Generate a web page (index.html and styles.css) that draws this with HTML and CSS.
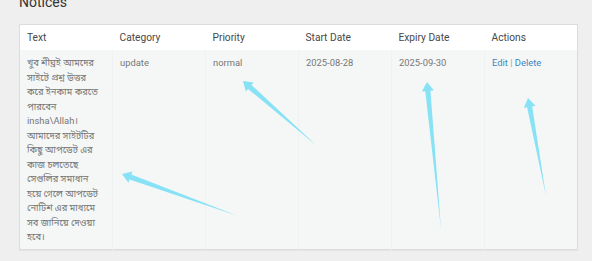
FILE: index.html
```html
<!DOCTYPE html>
<html lang="bn">
<head>
<meta charset="utf-8">
<title>Notices</title>
<link rel="stylesheet" href="styles.css">
</head>
<body>
<main class="page">
  <h2 class="title">Notices</h2>
  <table class="notices">
    <thead>
      <tr>
        <th>Text</th>
        <th>Category</th>
        <th>Priority</th>
        <th>Start Date</th>
        <th>Expiry Date</th>
        <th>Actions</th>
      </tr>
    </thead>
    <tbody>
      <tr>
        <td class="bn">খুব শীঘ্রই আমদের<br>সাইটে প্রশ্ন উত্তর<br>করে ইনকাম করতে<br>পারবেন<br>insha\Allah।<br>আমাদের সাইটটির<br>কিছু আপডেট এর<br>কাজ চলতেছে<br>সেগুলির সমাধান<br>হয়ে গেলে আপডেট<br>নোটিশ এর মাধ্যমে<br>সব জানিয়ে দেওয়া<br>হবে।</td>
        <td>update</td>
        <td>normal</td>
        <td>2025-08-28</td>
        <td>2025-09-30</td>
        <td><a href="#" class="act">Edit</a> <span class="sep">|</span> <a href="#" class="act">Delete</a></td>
      </tr>
    </tbody>
  </table>
</main>
<svg class="arrows" width="592" height="261" viewBox="0 0 592 261" aria-hidden="true">
  <g fill="#88e2f5">
    <polygon transform="translate(317 146) rotate(221.3)" points="0,0 89.5,-2.6 89.5,-6 98.5,0 89.5,6 89.5,2.6"/>
    <polygon transform="translate(238 216) rotate(199.9)" points="0,0 114.4,-2.6 114.4,-6 123.4,0 114.4,6 114.4,2.6"/>
    <polygon transform="translate(441 229) rotate(264.56)" points="0,0 138.7,-2.6 138.7,-6 147.7,0 138.7,6 138.7,2.6"/>
    <polygon transform="translate(546 196) rotate(259.6)" points="0,0 90.6,-2.6 90.6,-6 99.6,0 90.6,6 90.6,2.6"/>
  </g>
</svg>
</body>
</html>
```

FILE: styles.css
```css
html, body {
  margin: 0;
  padding: 0;
  background: #efefef;
  overflow: hidden;
}

body {
  position: relative;
  width: 592px;
  height: 261px;
  font-family: Roboto, "Noto Sans", sans-serif;
}

.page {
  padding: 0 15px 0 19px;
}

.title {
  margin: -6px 0 14px;
  font-size: 14px;
  line-height: 16px;
  font-weight: 400;
  color: #333;
}

.notices {
  width: 559px;
  border-collapse: collapse;
  table-layout: fixed;
  border: 1px solid #dcdcdc;
  box-shadow: 0 1px 1px rgba(0, 0, 0, 0.04);
}

.notices th {
  background: #fff;
  text-align: left;
  font-weight: 400;
  font-size: 10.2px;
  line-height: 14px;
  color: #474747;
  padding: 6px 4px 5px 7px;
}

.notices td {
  background: #f5f7f7;
  vertical-align: top;
  font-size: 9.4px;
  line-height: 14.5px;
  color: #767676;
  padding: 6px 4px 4px 7px;
  border-left: 1px solid #f0f2f2;
}

.notices td:first-child {
  border-left: none;
}

.notices td.bn {
  font-family: Roboto, "Noto Sans Bengali", "Noto Sans", sans-serif;
  white-space: nowrap;
}

.act {
  color: #3a85c2;
  text-decoration: none;
}

.sep {
  color: #a0a0a0;
}

.arrows {
  position: absolute;
  top: 0;
  left: 0;
  pointer-events: none;
}
```
